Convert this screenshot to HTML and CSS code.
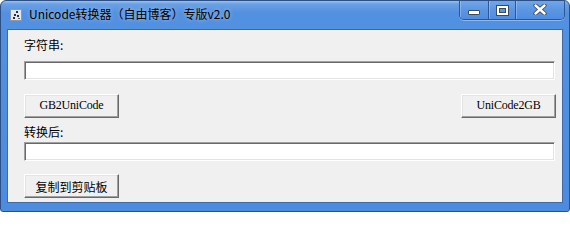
FILE: index.html
```html
<!DOCTYPE html>
<html>
<head>
<meta charset="utf-8">
<link rel="stylesheet" href="styles.css">
</head>
<body>
<div class="window">
  <div class="titlebar">
    <span class="app-icon">
      <svg width="12" height="12" viewBox="0 0 12 12">
        <rect x="0.5" y="0.5" width="11" height="11" fill="#e4e8ee" stroke="#8a99b0"/>
        <rect x="6" y="2" width="2" height="2" fill="#2a2f3a"/>
        <rect x="4" y="5" width="2" height="2" fill="#2a2f3a"/>
        <rect x="7" y="6" width="2" height="2" fill="#2a2f3a"/>
        <rect x="3" y="8" width="2" height="2" fill="#2a2f3a"/>
        <rect x="8" y="9" width="2" height="1" fill="#555c6a"/>
      </svg>
    </span>
    <span class="title">Unicode转换器（自由博客）专版v2.0</span>
    <div class="caption">
      <span class="cb cb-min"><span class="glyph-min"></span></span>
      <span class="cb cb-max"><span class="glyph-max"></span></span>
      <span class="cb cb-close">
        <svg width="14" height="11" viewBox="0 0 14 11">
          <path d="M2.5 1.5 L11.5 9.5 M11.5 1.5 L2.5 9.5" stroke="#3a4a60" stroke-width="4.2" stroke-linecap="round"/>
          <path d="M2.5 1.5 L11.5 9.5 M11.5 1.5 L2.5 9.5" stroke="#ffffff" stroke-width="2.4" stroke-linecap="round"/>
        </svg>
      </span>
    </div>
  </div>
  <div class="client">
    <div class="lbl lbl-first">字符串:</div>
    <div class="field field-first"></div>
    <div class="row row-first">
      <div class="btn btn-latin">GB2UniCode</div>
      <div class="btn btn-latin">UniCode2GB</div>
    </div>
    <div class="lbl lbl-second">转换后:</div>
    <div class="field field-second"></div>
    <div class="row row-second">
      <div class="btn btn-cjk">复制到剪贴板</div>
    </div>
  </div>
</div>
</body>
</html>
```

FILE: styles.css
```css
html, body {
  margin: 0;
  padding: 0;
  background: #ffffff;
}

.window {
  width: 570px;
  height: 212px;
  box-sizing: border-box;
  border: 1px solid #2c4f86;
  border-radius: 6px 6px 3px 3px;
  background: linear-gradient(to bottom, #9cc0ee 0px, #6aa0e4 3px, #5290e0 12px, #4d8bdf 100%);
  display: flex;
  flex-direction: column;
  overflow: hidden;
  font-family: "Noto Sans CJK SC", "Noto Sans", sans-serif;
}

.titlebar {
  height: 28px;
  display: flex;
  align-items: flex-start;
  padding-left: 9px;
  padding-right: 4px;
  box-sizing: border-box;
}

.app-icon {
  width: 12px;
  height: 12px;
  margin-top: 8px;
  display: flex;
}

.title {
  margin-left: 7px;
  margin-top: 5px;
  font-size: 12px;
  line-height: 16px;
  color: #000000;
  text-shadow: 0 0 4px rgba(255, 255, 255, 0.55);
  white-space: nowrap;
}

.caption {
  margin-left: auto;
  display: flex;
  height: 19px;
  margin-top: -1px;
  border: 1px solid #2f5690;
  border-top: none;
  border-radius: 0 0 5px 5px;
  overflow: hidden;
  box-shadow: 0 1px 0 rgba(255, 255, 255, 0.35);
}

.cb {
  height: 19px;
  display: flex;
  align-items: center;
  justify-content: center;
  background: linear-gradient(to bottom, #74a8ea 0%, #5c96e2 50%, #508de0 100%);
  box-shadow: inset 1px 0 0 rgba(255, 255, 255, 0.25);
}

.cb-min {
  width: 28px;
  border-right: 1px solid #2f5690;
}

.cb-max {
  width: 26px;
  border-right: 1px solid #2f5690;
}

.cb-close {
  width: 48px;
}

.glyph-min {
  width: 10px;
  height: 3px;
  margin-top: 5px;
  background: #ffffff;
  border: 1px solid #3a4a60;
  border-radius: 1px;
}

.glyph-max {
  width: 7px;
  height: 5px;
  border: 2px solid #ffffff;
  outline: 1px solid #3a4a60;
  box-shadow: inset 0 0 0 1px #3a4a60;
  margin-top: 1px;
}

.client {
  flex: 1;
  margin: 1px 7px 9px 7px;
  background: #f0f0f0;
  box-shadow: 0 0 0 1px #3e6aa8;
  display: flex;
  flex-direction: column;
  padding: 7px 6px 0 16px;
}

.lbl {
  font-size: 12px;
  line-height: 16px;
  height: 16px;
  color: #000000;
}

.lbl-second {
  margin-top: 6px;
}

.field {
  height: 19px;
  box-sizing: border-box;
  margin-right: 1px;
  background: #ffffff;
  border-top: 1px solid #a0a0a0;
  border-left: 1px solid #a0a0a0;
  border-right: 1px solid #ffffff;
  border-bottom: 1px solid #ffffff;
  box-shadow: inset 1px 1px 0 #696969, inset -1px -1px 0 #e3e3e3;
}

.field-first {
  margin-top: 8px;
}

.field-second {
  margin-top: 2px;
}

.row {
  display: flex;
  justify-content: space-between;
}

.row-first {
  margin-top: 14px;
}

.row-second {
  margin-top: 13px;
}

.btn {
  width: 95px;
  height: 24px;
  box-sizing: border-box;
  background: #f0f0f0;
  border-top: 1px solid #ffffff;
  border-left: 1px solid #ffffff;
  border-right: 1px solid #696969;
  border-bottom: 1px solid #696969;
  box-shadow: inset -1px -1px 0 #a0a0a0, inset 1px 1px 0 #e3e3e3;
  display: flex;
  align-items: center;
  justify-content: center;
  color: #000000;
  white-space: nowrap;
}

.btn-latin {
  font-family: "Liberation Serif", "DejaVu Serif", serif;
  font-size: 12px;
  letter-spacing: -0.2px;
  padding-bottom: 1px;
}

.btn-cjk {
  font-family: "Noto Sans CJK SC", sans-serif;
  font-size: 12px;
}
```
